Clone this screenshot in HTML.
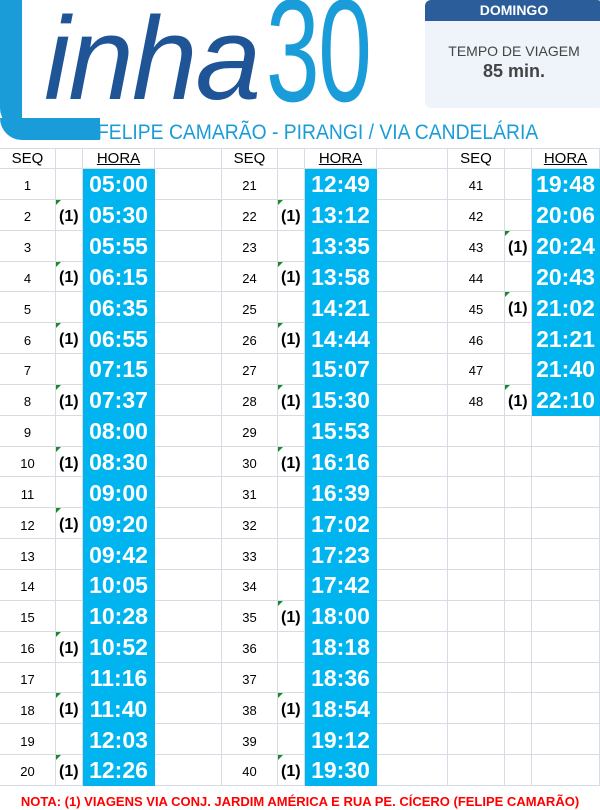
<!DOCTYPE html>
<html><head><meta charset="utf-8"><style>
body{margin:0;width:600px;height:810px;background:#fff;position:relative;overflow:hidden;font-family:"Liberation Sans",Arial,sans-serif}
.L1{position:absolute;left:0;top:0;width:22px;height:130px;background:#1a9cd8;border-bottom-left-radius:30px}
.L2{position:absolute;left:0;top:118px;width:100px;height:22px;background:#1a9cd8;border-bottom-left-radius:30px}
.inha{position:absolute;left:44px;top:0px;font-size:118px;font-style:italic;color:#1f5597;letter-spacing:-2px;line-height:1}
.thirty{position:absolute;left:266px;top:-22px;font-size:146px;color:#1a9cd8;line-height:1;transform:scaleX(0.66);transform-origin:left top;letter-spacing:-2px}
.sub{position:absolute;left:97px;top:121px;font-size:21px;color:#1a9cd8;white-space:nowrap;transform:scaleX(0.92);transform-origin:left top}
.box{position:absolute;left:425px;top:0;width:178px;height:108px;background:#eef4f9;border-radius:6px;overflow:hidden}
.box .h{background:#2b5d9b;color:#fff;font-weight:bold;font-size:14px;text-align:center;height:21px;line-height:21px}
.box .t{text-align:center;color:#444;font-size:14px;margin-top:22px}
.box .m{text-align:center;color:#444;font-size:18px;font-weight:bold;margin-top:2px}
.g{position:absolute;left:0;top:148px;display:grid;grid-template-columns:56px 27px 72px 67px 56px 27px 72px 71px 57px 27px 68px;grid-template-rows:20px repeat(20,30.85px);border-top:1px solid #d6dbe4}
.g div{box-sizing:border-box;border-right:1px solid #d6dbe4;border-bottom:1px solid #d6dbe4;display:flex;align-items:center;justify-content:center;font-size:13px;color:#000;white-space:nowrap;overflow:hidden;position:relative;padding-top:4px}
.g .hd{font-size:15px;padding-top:0}
.g .u{text-decoration:underline}
.g .b{background:#00b5ef;border-color:#00b5ef;color:#fff;font-weight:bold;font-size:23px;padding-top:2px}
.g .o{font-weight:bold;font-size:16px;justify-content:flex-start;padding-left:3px}
.g .o:before{content:"";position:absolute;left:0;top:0;border-top:5px solid #1a8a2a;border-right:5px solid transparent}
.nota{position:absolute;left:0;width:600px;top:794px;text-align:center;color:#f00;font-weight:bold;font-size:13px}
</style></head><body>
<div class="L1"></div><div class="L2"></div>
<div class="inha">inha</div>
<div class="thirty">30</div>
<div class="sub">FELIPE CAMARÃO - PIRANGI / VIA CANDELÁRIA</div>
<div class="box"><div class="h">DOMINGO</div><div class="t">TEMPO DE VIAGEM</div><div class="m">85 min.</div></div>
<div class="g">
<div class="hd">SEQ</div><div class="hd"></div><div class="hd u">HORA</div><div class="hd"></div><div class="hd">SEQ</div><div class="hd"></div><div class="hd u">HORA</div><div class="hd"></div><div class="hd">SEQ</div><div class="hd"></div><div class="hd u">HORA</div>
<div>1</div><div></div><div class="b">05:00</div><div></div><div>21</div><div></div><div class="b">12:49</div><div></div><div>41</div><div></div><div class="b">19:48</div>
<div>2</div><div class="o">(1)</div><div class="b">05:30</div><div></div><div>22</div><div class="o">(1)</div><div class="b">13:12</div><div></div><div>42</div><div></div><div class="b">20:06</div>
<div>3</div><div></div><div class="b">05:55</div><div></div><div>23</div><div></div><div class="b">13:35</div><div></div><div>43</div><div class="o">(1)</div><div class="b">20:24</div>
<div>4</div><div class="o">(1)</div><div class="b">06:15</div><div></div><div>24</div><div class="o">(1)</div><div class="b">13:58</div><div></div><div>44</div><div></div><div class="b">20:43</div>
<div>5</div><div></div><div class="b">06:35</div><div></div><div>25</div><div></div><div class="b">14:21</div><div></div><div>45</div><div class="o">(1)</div><div class="b">21:02</div>
<div>6</div><div class="o">(1)</div><div class="b">06:55</div><div></div><div>26</div><div class="o">(1)</div><div class="b">14:44</div><div></div><div>46</div><div></div><div class="b">21:21</div>
<div>7</div><div></div><div class="b">07:15</div><div></div><div>27</div><div></div><div class="b">15:07</div><div></div><div>47</div><div></div><div class="b">21:40</div>
<div>8</div><div class="o">(1)</div><div class="b">07:37</div><div></div><div>28</div><div class="o">(1)</div><div class="b">15:30</div><div></div><div>48</div><div class="o">(1)</div><div class="b">22:10</div>
<div>9</div><div></div><div class="b">08:00</div><div></div><div>29</div><div></div><div class="b">15:53</div><div></div><div></div><div></div><div></div>
<div>10</div><div class="o">(1)</div><div class="b">08:30</div><div></div><div>30</div><div class="o">(1)</div><div class="b">16:16</div><div></div><div></div><div></div><div></div>
<div>11</div><div></div><div class="b">09:00</div><div></div><div>31</div><div></div><div class="b">16:39</div><div></div><div></div><div></div><div></div>
<div>12</div><div class="o">(1)</div><div class="b">09:20</div><div></div><div>32</div><div></div><div class="b">17:02</div><div></div><div></div><div></div><div></div>
<div>13</div><div></div><div class="b">09:42</div><div></div><div>33</div><div></div><div class="b">17:23</div><div></div><div></div><div></div><div></div>
<div>14</div><div></div><div class="b">10:05</div><div></div><div>34</div><div></div><div class="b">17:42</div><div></div><div></div><div></div><div></div>
<div>15</div><div></div><div class="b">10:28</div><div></div><div>35</div><div class="o">(1)</div><div class="b">18:00</div><div></div><div></div><div></div><div></div>
<div>16</div><div class="o">(1)</div><div class="b">10:52</div><div></div><div>36</div><div></div><div class="b">18:18</div><div></div><div></div><div></div><div></div>
<div>17</div><div></div><div class="b">11:16</div><div></div><div>37</div><div></div><div class="b">18:36</div><div></div><div></div><div></div><div></div>
<div>18</div><div class="o">(1)</div><div class="b">11:40</div><div></div><div>38</div><div class="o">(1)</div><div class="b">18:54</div><div></div><div></div><div></div><div></div>
<div>19</div><div></div><div class="b">12:03</div><div></div><div>39</div><div></div><div class="b">19:12</div><div></div><div></div><div></div><div></div>
<div>20</div><div class="o">(1)</div><div class="b">12:26</div><div></div><div>40</div><div class="o">(1)</div><div class="b">19:30</div><div></div><div></div><div></div><div></div>
</div>
<div class="nota">NOTA: (1) VIAGENS VIA CONJ. JARDIM AMÉRICA E RUA PE. CÍCERO (FELIPE CAMARÃO)</div>
</body></html>
